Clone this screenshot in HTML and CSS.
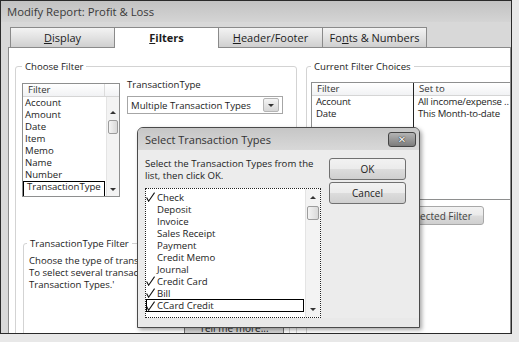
FILE: index.html
```html
<!DOCTYPE html>
<html lang="en">

<head>
    <meta charset="UTF-8" />
    <title>Modify Report: Profit &amp; Loss</title>
    <link rel="stylesheet" href="styles.css">
</head>

<body>
    <div class="window">
        <div class="titlebar">Modify Report: Profit &amp; Loss</div>

        <div class="tabs">
            <div class="tab"><u>D</u>isplay</div>
            <div class="tab active"><u>F</u>ilters</div>
            <div class="tab"><u>H</u>eader/Footer</div>
            <div class="tab">Fo<u>n</u>ts &amp; Numbers</div>
        </div>

        <div class="panel">
            <div class="group choose">
                <div class="group-title">Choose Filter</div>
                <div class="choose-row">
                    <div class="listbox filters">
                        <div class="list-head"><span class="head-cell">Filter</span><span class="head-sb"></span></div>
                        <div class="list-body">
                            <div class="items">
                                <div class="item">Account</div>
                                <div class="item">Amount</div>
                                <div class="item">Date</div>
                                <div class="item">Item</div>
                                <div class="item">Memo</div>
                                <div class="item">Name</div>
                                <div class="item">Number</div>
                                <div class="item current">TransactionType</div>
                            </div>
                            <div class="vscroll short">
                                <span class="sb-btn"><span class="arrow up"></span></span>
                                <span class="thumb"></span>
                                <span class="sb-fill"></span>
                                <span class="sb-btn"><span class="arrow down"></span></span>
                            </div>
                        </div>
                    </div>
                    <div class="filter-edit">
                        <div class="field-label">TransactionType</div>
                        <div class="combo">
                            <span>Multiple Transaction Types</span>
                            <span class="combo-btn"><span class="arrow down"></span></span>
                        </div>
                    </div>
                </div>

                <div class="group help">
                    <div class="group-title">TransactionType Filter</div>
                    <p class="help-text">Choose the type of transaction you want to filter for.<br>To select several transaction types, choose 'Multiple<br>Transaction Types.'</p>
                    <button class="btn tell">Tell me more...</button>
                </div>
            </div>

            <div class="group current">
                <div class="group-title">Current Filter Choices</div>
                <div class="choices">
                    <div class="tcol first">
                        <div class="th">Filter</div>
                        <div class="td">Account</div>
                        <div class="td">Date</div>
                    </div>
                    <div class="tcol">
                        <div class="th">Set to</div>
                        <div class="td">All income/expense ..</div>
                        <div class="td">This Month-to-date</div>
                    </div>
                </div>
                <button class="btn remove">Remove Selected Filter</button>
            </div>
        </div>

        <!-- popup on top of the tab page -->
        <div class="dialog">
            <div class="dlg-title">
                <span>Select Transaction Types</span>
                <span class="close">&#x2715;</span>
            </div>
            <div class="dlg-body">
                <div class="dlg-left">
                    <div class="dlg-text">Select the Transaction Types from the<br>list, then click OK.</div>
                    <div class="listbox types">
                        <div class="items">
                            <div class="opt"><span class="chk"><svg width="9" height="10" viewBox="0 0 9 10"><polyline points="0.6,5.6 2.6,9.2 8.6,0.6" /></svg></span>Check</div>
                            <div class="opt"><span class="chk"></span>Deposit</div>
                            <div class="opt"><span class="chk"></span>Invoice</div>
                            <div class="opt"><span class="chk"></span>Sales Receipt</div>
                            <div class="opt"><span class="chk"></span>Payment</div>
                            <div class="opt"><span class="chk"></span>Credit Memo</div>
                            <div class="opt"><span class="chk"></span>Journal</div>
                            <div class="opt"><span class="chk"><svg width="9" height="10" viewBox="0 0 9 10"><polyline points="0.6,5.6 2.6,9.2 8.6,0.6" /></svg></span>Credit Card</div>
                            <div class="opt"><span class="chk"><svg width="9" height="10" viewBox="0 0 9 10"><polyline points="0.6,5.6 2.6,9.2 8.6,0.6" /></svg></span>Bill</div>
                            <div class="opt selected"><span class="chk"><svg width="9" height="10" viewBox="0 0 9 10"><polyline points="0.6,5.6 2.6,9.2 8.6,0.6" /></svg></span>CCard Credit</div>
                        </div>
                        <div class="vscroll">
                            <span class="sb-btn"><span class="arrow up"></span></span>
                            <span class="thumb"></span>
                            <span class="sb-fill"></span>
                            <span class="sb-btn"><span class="arrow down"></span></span>
                        </div>
                    </div>
                </div>
                <div class="dlg-buttons">
                    <button class="btn">OK</button>
                    <button class="btn cancel">Cancel</button>
                </div>
            </div>
        </div>
    </div>
</body>

</html>
```

FILE: styles.css
```css
body {
    margin: 0;
    background: #e8e8e8;
    font-family: "Open Sans", "DejaVu Sans", sans-serif;
    font-size: 9.6px;
    color: #1c1c1c;
}

.window {
    position: relative;
    width: 512px;
    height: 334px;
    box-sizing: border-box;
    border: 1px solid #2a2a2a;
    background: #d8d8d8;
    overflow: hidden;
}

.titlebar {
    height: 21px;
    line-height: 22px;
    padding-left: 6px;
    font-size: 11.3px;
    color: #3a3a3a;
    background: linear-gradient(#c2c2c2, #d4d4d4);
}

/* tabs */
.tabs {
    display: flex;
    height: 20px;
    padding: 5px 0 0 9px;
}

.tab {
    width: 105px;
    height: 20px;
    box-sizing: border-box;
    margin-right: -1px;
    border: 1px solid #8a8a8a;
    border-bottom: none;
    background: linear-gradient(#f3f3f3, #e2e2e2 50%, #cfcfcf);
    text-align: center;
    line-height: 19px;
    font-size: 11px;
}

.tab.active {
    position: relative;
    z-index: 1;
    height: 21px;
    background: #fff;
    font-weight: bold;
}

.panel {
    display: grid;
    grid-template-columns: 282px 215px;
    column-gap: 9px;
    align-items: start;
    width: 503px;
    height: 290px;
    box-sizing: border-box;
    margin-left: 7px;
    padding: 18px 0 0 6px;
    border: 1px solid #8a8a8a;
    border-bottom: none;
    background: #fff;
    overflow: hidden;
}

/* group boxes */
.group {
    border: 1px solid #d3d3d3;
    border-radius: 3px;
}

.group-title {
    width: fit-content;
    margin-top: -7px;
    padding: 0 3px;
    line-height: 13px;
    background: #fff;
}

.choose {
    height: 290px;
    padding: 0 6px;
}

.choose-row {
    display: flex;
    margin-top: 10px;
}

/* list boxes */
.listbox {
    border: 1px solid #8e8f8f;
    background: #fff;
    box-sizing: border-box;
}

.filters {
    width: 98px;
    height: 114px;
    overflow: hidden;
}

.list-head {
    display: flex;
    height: 12px;
    border-bottom: 1px solid #d5d5d5;
    background: linear-gradient(#fff, #f1f2f4);
    line-height: 12px;
}

.head-cell {
    flex: 1;
    padding-left: 5px;
    color: #333;
    border-right: 1px solid #dcdcdc;
}

.head-sb {
    width: 14px;
}

.list-body {
    display: flex;
    height: 99px;
}

.items {
    flex: 1;
}

.item {
    height: 12px;
    line-height: 12px;
    padding-left: 2px;
    white-space: nowrap;
}

.item.current {
    margin-right: 1px;
    outline: 1px solid #000;
    outline-offset: -1px;
}

.vscroll {
    display: flex;
    flex-direction: column;
    width: 15px;
    background: #f3f3f3;
    border-left: 1px solid #e4e4e4;
    box-sizing: border-box;
}

.vscroll.short {
    width: 14px;
    padding-top: 9px;
}

.sb-btn {
    display: flex;
    align-items: center;
    justify-content: center;
    height: 16px;
}

.short .sb-btn {
    height: 13px;
}

.thumb {
    height: 12px;
    margin: 1px 1px 0;
    border: 1px solid #9c9c9c;
    border-radius: 2px;
    background: linear-gradient(90deg, #f4f4f4, #d9d9d9);
}

.sb-fill {
    flex: 1;
}

.arrow {
    width: 0;
    height: 0;
    border-left: 3px solid transparent;
    border-right: 3px solid transparent;
}

.arrow.up {
    border-bottom: 3px solid #333;
}

.arrow.down {
    border-top: 3px solid #333;
}

.filter-edit {
    margin: -4px 0 0 7px;
}

.field-label {
    line-height: 12px;
}

.combo {
    display: flex;
    align-items: center;
    justify-content: space-between;
    width: 156px;
    height: 18px;
    box-sizing: border-box;
    margin-top: 5px;
    padding: 0 3px 0 3px;
    border: 1px solid #a6a6a6;
    background: #fff;
}

.combo-btn {
    display: flex;
    align-items: center;
    justify-content: center;
    width: 14px;
    height: 12px;
    border: 1px solid #b5b5b5;
    border-radius: 2px;
    background: linear-gradient(#f4f4f4, #d6d6d6);
}

.help {
    height: 120px;
    margin: 46px 0 0 1px;
    padding: 0 5px;
}

.help .group-title {
    margin-left: -2px;
}

.help-text {
    margin: 5px 0 0;
    line-height: 12px;
    white-space: nowrap;
}

/* buttons */
.btn {
    display: block;
    width: 100%;
    height: 22px;
    padding: 0;
    border: 1px solid #707070;
    border-radius: 3px;
    background: linear-gradient(#f2f2f2, #ebebeb 48%, #dcdcdc 52%, #cfcfcf);
    font-family: inherit;
    font-size: 10px;
    color: #1c1c1c;
}

.tell {
    width: 100px;
    height: 20px;
    margin: 27px 0 0 auto;
}

/* current filter choices */
.current {
    height: 290px;
    padding: 0 4px;
}

.choices {
    display: flex;
    width: 200px;
    height: 118px;
    margin-top: 9px;
    box-sizing: border-box;
    border: 1px solid #8e8f8f;
}

.tcol {
    flex: 1;
    border-left: 1px solid #222;
}

.tcol.first {
    flex: none;
    width: 101px;
    border-left: none;
}

.th {
    height: 12px;
    line-height: 12px;
    padding-left: 5px;
    border-bottom: 1px solid #d5d5d5;
    background: linear-gradient(#fff, #f1f2f4);
    color: #333;
}

.td {
    line-height: 12px;
    padding-left: 4px;
    white-space: nowrap;
    letter-spacing: -0.2px;
}

.remove {
    width: 130px;
    height: 19px;
    margin: 6px 0 0 43px;
    border-color: #a8a8a8;
    color: #444;
}

/* Select Transaction Types popup */
.dialog {
    position: absolute;
    left: 136px;
    top: 126px;
    width: 283px;
    height: 201px;
    box-sizing: border-box;
    border: 1px solid #4a4a4a;
    border-radius: 6px 6px 0 0;
    background: #e9e9e9;
    box-shadow: 2px 2px 4px rgba(0, 0, 0, 0.35);
}

.dlg-title {
    display: flex;
    align-items: center;
    justify-content: space-between;
    height: 22px;
    padding: 0 3px 0 7px;
    border-radius: 5px 5px 0 0;
    background: linear-gradient(#c6c6c6, #d8d8d8);
    font-size: 11px;
    color: #333;
}

.close {
    width: 28px;
    height: 15px;
    box-sizing: border-box;
    border: 1px solid #444;
    border-radius: 3px;
    background: linear-gradient(#b4b4b4, #7c7c7c);
    color: #fff;
    font-family: "DejaVu Sans", sans-serif;
    font-size: 10px;
    font-weight: bold;
    line-height: 13px;
    text-align: center;
    text-shadow: 0 0 1px #222, 0 0 1px #222;
}

.dlg-body {
    display: grid;
    grid-template-columns: 176px 77px;
    column-gap: 8px;
    padding: 8px 7px 0;
    background: #ececec;
}

.dlg-text {
    line-height: 12px;
    white-space: nowrap;
}

.types {
    display: flex;
    height: 130px;
    margin-top: 6px;
    border: 1px dotted #222;
}

.types .items {
    padding-top: 2px;
}

.opt {
    display: flex;
    align-items: center;
    height: 12px;
    white-space: nowrap;
}

.opt.selected {
    height: 13px;
    margin-right: 1px;
    outline: 1px solid #000;
    outline-offset: -1px;
}

.chk {
    display: flex;
    width: 11px;
    height: 10px;
}

.chk svg polyline {
    fill: none;
    stroke: #111;
    stroke-width: 1.1;
}

.cancel {
    margin-top: 2px;
}
```
